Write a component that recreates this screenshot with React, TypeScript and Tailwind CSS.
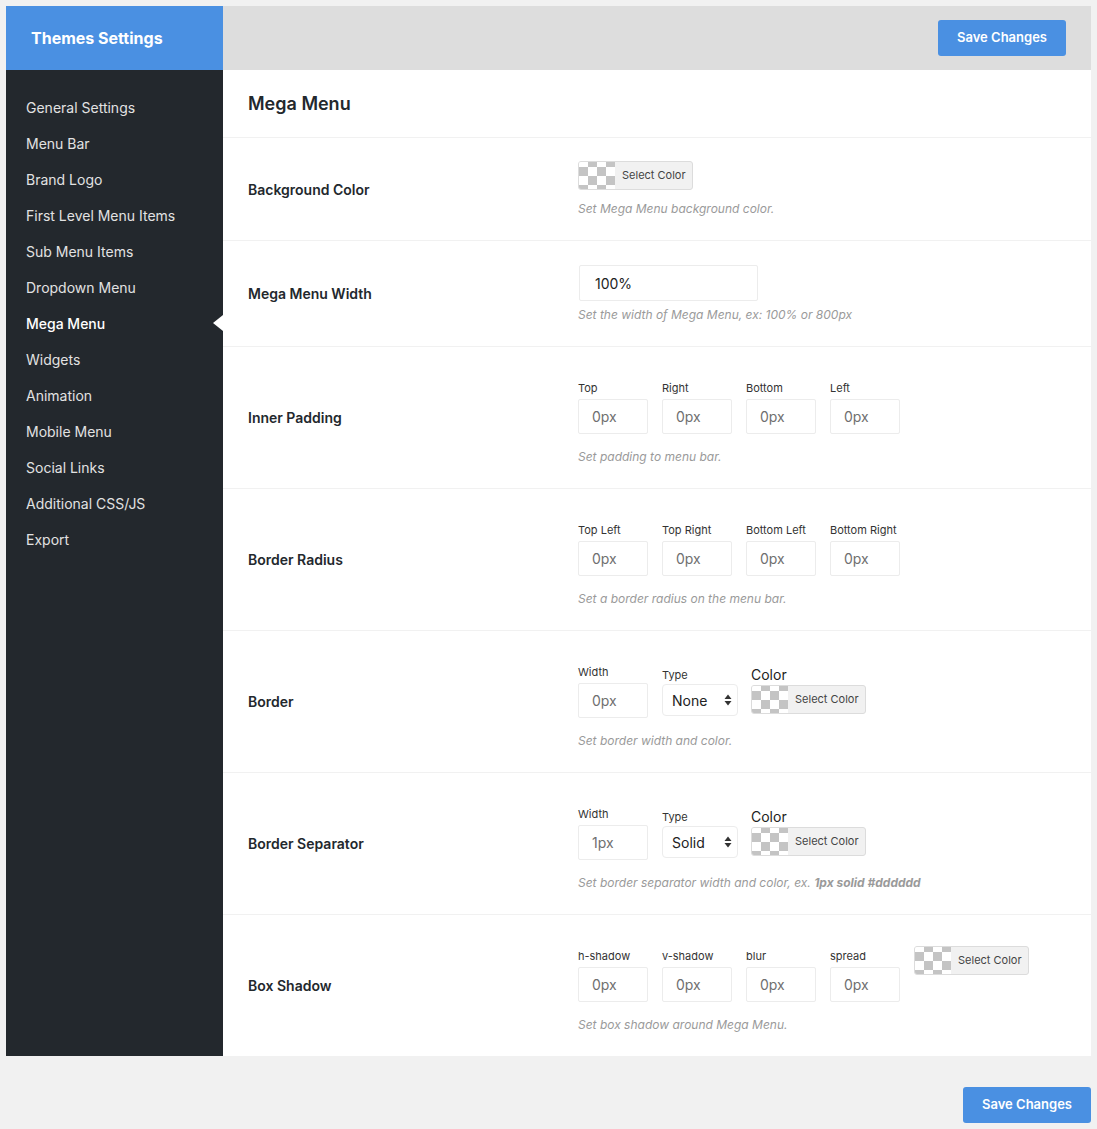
import type { ReactNode } from 'react';

const navItems = [
  'General Settings',
  'Menu Bar',
  'Brand Logo',
  'First Level Menu Items',
  'Sub Menu Items',
  'Dropdown Menu',
  'Mega Menu',
  'Widgets',
  'Animation',
  'Mobile Menu',
  'Social Links',
  'Additional CSS/JS',
  'Export',
];

function Checker() {
  return (
    <svg width="36" height="28" viewBox="0 0 36 28" className="block shrink-0">
      <defs>
        <pattern id="chk" width="18" height="18" patternUnits="userSpaceOnUse" y="-4">
          <rect width="18" height="18" fill="#ffffff" />
          <rect x="9" width="9" height="9" fill="#c4c4c4" />
          <rect y="9" width="9" height="9" fill="#c4c4c4" />
        </pattern>
      </defs>
      <rect width="36" height="28" fill="url(#chk)" />
    </svg>
  );
}

function ColorButton() {
  return (
    <button className="flex h-[29px] items-stretch overflow-hidden rounded-[3px] border border-[#dcdcdc] bg-[#f1f1f1] text-[11px] text-[#444]">
      <Checker />
      <span className="flex items-center pl-[7px] pr-[6px]">Select Color</span>
    </button>
  );
}

function TextBox({ value, dark, w = 'w-[70px]' }: { value: string; dark?: boolean; w?: string }) {
  return (
    <div className={`${w} flex h-[35px] items-center rounded-[2px] border border-[#ececec] bg-white px-[13px] text-[14px] ${dark ? 'text-[#222]' : 'text-[#6f6f6f]'}`}>
      {value}
    </div>
  );
}

function Field({ label, value }: { label: string; value: string }) {
  return (
    <div className="flex w-[84px] flex-col">
      <span className="mb-[4px] text-[11px] leading-[13px] text-[#333]">{label}</span>
      <TextBox value={value} />
    </div>
  );
}

function SelectBox({ value }: { value: string }) {
  return (
    <div className="flex h-[32px] w-[76px] items-center justify-between rounded-[4px] border border-[#ececec] bg-white pl-[9px] pr-[5px] text-[14px] text-[#222]">
      <span>{value}</span>
      <svg width="8" height="12" viewBox="0 0 8 12">
        <path d="M4 0.5 L7.5 5 H0.5 Z M4 11.5 L7.5 7 H0.5 Z" fill="#333" />
      </svg>
    </div>
  );
}

function Desc({ children, className = '' }: { children: ReactNode; className?: string }) {
  return <p className={`text-[12px] italic leading-[16px] text-[#9a9a9a] ${className}`}>{children}</p>;
}

function Row({ label, h, pt, children }: { label: string; h: string; pt: string; children: ReactNode }) {
  return (
    <div className={`flex ${h} border-t border-[#f1f1f1]`}>
      <div className="flex w-[355px] shrink-0 items-center pl-[25px] text-[14px] font-semibold text-[#23282d]">{label}</div>
      <div className={`flex flex-col ${pt}`}>{children}</div>
    </div>
  );
}

function BorderControls({ width, type }: { width: string; type: string }) {
  return (
    <div className="flex">
      <Field label="Width" value={width} />
      <div className="flex w-[89px] flex-col">
        <span className="mb-[2px] pt-[3px] text-[11px] leading-[13px] text-[#333]">Type</span>
        <SelectBox value={type} />
      </div>
      <div className="flex flex-col">
        <span className="mb-[2px] text-[14px] leading-[17px] text-[#222]">Color</span>
        <ColorButton />
      </div>
    </div>
  );
}

function SaveButton() {
  return (
    <button className="h-[36px] w-[128px] rounded-[3px] bg-[#4a90e2] text-[13px] font-semibold text-white">Save Changes</button>
  );
}

export default function App() {
  return (
    <div className="min-h-[1129px] bg-[#f1f1f1] p-[6px] font-['Inter','Liberation_Sans',sans-serif]">
      <div className="flex">
        <aside className="w-[217px] shrink-0 bg-[#23282d]">
          <div className="flex h-[64px] items-center bg-[#4a90e2] pl-[25px] text-[16px] font-bold text-white">Themes Settings</div>
          <nav className="pt-[19px]">
            {navItems.map((item) => (
              <div
                key={item}
                className={`relative flex h-[36px] items-center pl-[20px] text-[14px] ${item === 'Mega Menu' ? 'font-medium text-white' : 'text-[#e2e2e2]'}`}
              >
                {item}
                {item === 'Mega Menu' && (
                  <span className="absolute right-0 top-1/2 -translate-y-1/2 border-y-[8px] border-r-[10px] border-y-transparent border-r-white" />
                )}
              </div>
            ))}
          </nav>
        </aside>
        <main className="flex-1">
          <div className="flex h-[64px] items-center justify-end bg-[#dddddd] pr-[25px]">
            <SaveButton />
          </div>
          <div className="bg-white">
            <h1 className="flex h-[67px] items-center pl-[25px] text-[18px] font-semibold text-[#23282d]">Mega Menu</h1>

            <Row label="Background Color" h="h-[103px]" pt="pt-[23px]">
              <div>
                <ColorButton />
              </div>
              <Desc className="mt-[11px]">Set Mega Menu background color.</Desc>
            </Row>

            <Row label="Mega Menu Width" h="h-[106px]" pt="pt-[24px]">
              <div className="pl-[1px]">
                <div className="flex h-[36px] w-[179px] items-center rounded-[2px] border border-[#ececec] bg-white px-[15px] text-[14px] text-[#222]">100%</div>
              </div>
              <Desc className="mt-[6px]">Set the width of Mega Menu, ex: 100% or 800px</Desc>
            </Row>

            <Row label="Inner Padding" h="h-[142px]" pt="pt-[35px]">
              <div className="flex">
                <Field label="Top" value="0px" />
                <Field label="Right" value="0px" />
                <Field label="Bottom" value="0px" />
                <Field label="Left" value="0px" />
              </div>
              <Desc className="mt-[15px]">Set padding to menu bar.</Desc>
            </Row>

            <Row label="Border Radius" h="h-[142px]" pt="pt-[35px]">
              <div className="flex">
                <Field label="Top Left" value="0px" />
                <Field label="Top Right" value="0px" />
                <Field label="Bottom Left" value="0px" />
                <Field label="Bottom Right" value="0px" />
              </div>
              <Desc className="mt-[15px]">Set a border radius on the menu bar.</Desc>
            </Row>

            <Row label="Border" h="h-[142px]" pt="pt-[35px]">
              <BorderControls width="0px" type="None" />
              <Desc className="mt-[15px]">Set border width and color.</Desc>
            </Row>

            <Row label="Border Separator" h="h-[142px]" pt="pt-[35px]">
              <BorderControls width="1px" type="Solid" />
              <Desc className="mt-[15px]">
                Set border separator width and color, ex. <b>1px solid #dddddd</b>
              </Desc>
            </Row>

            <Row label="Box Shadow" h="h-[142px]" pt="pt-[35px]">
              <div className="flex">
                <Field label="h-shadow" value="0px" />
                <Field label="v-shadow" value="0px" />
                <Field label="blur" value="0px" />
                <Field label="spread" value="0px" />
                <div className="-mt-[4px]">
                  <ColorButton />
                </div>
              </div>
              <Desc className="mt-[15px]">Set box shadow around Mega Menu.</Desc>
            </Row>
          </div>
        </main>
      </div>
      <div className="mt-[31px] flex justify-end">
        <SaveButton />
      </div>
    </div>
  );
}
